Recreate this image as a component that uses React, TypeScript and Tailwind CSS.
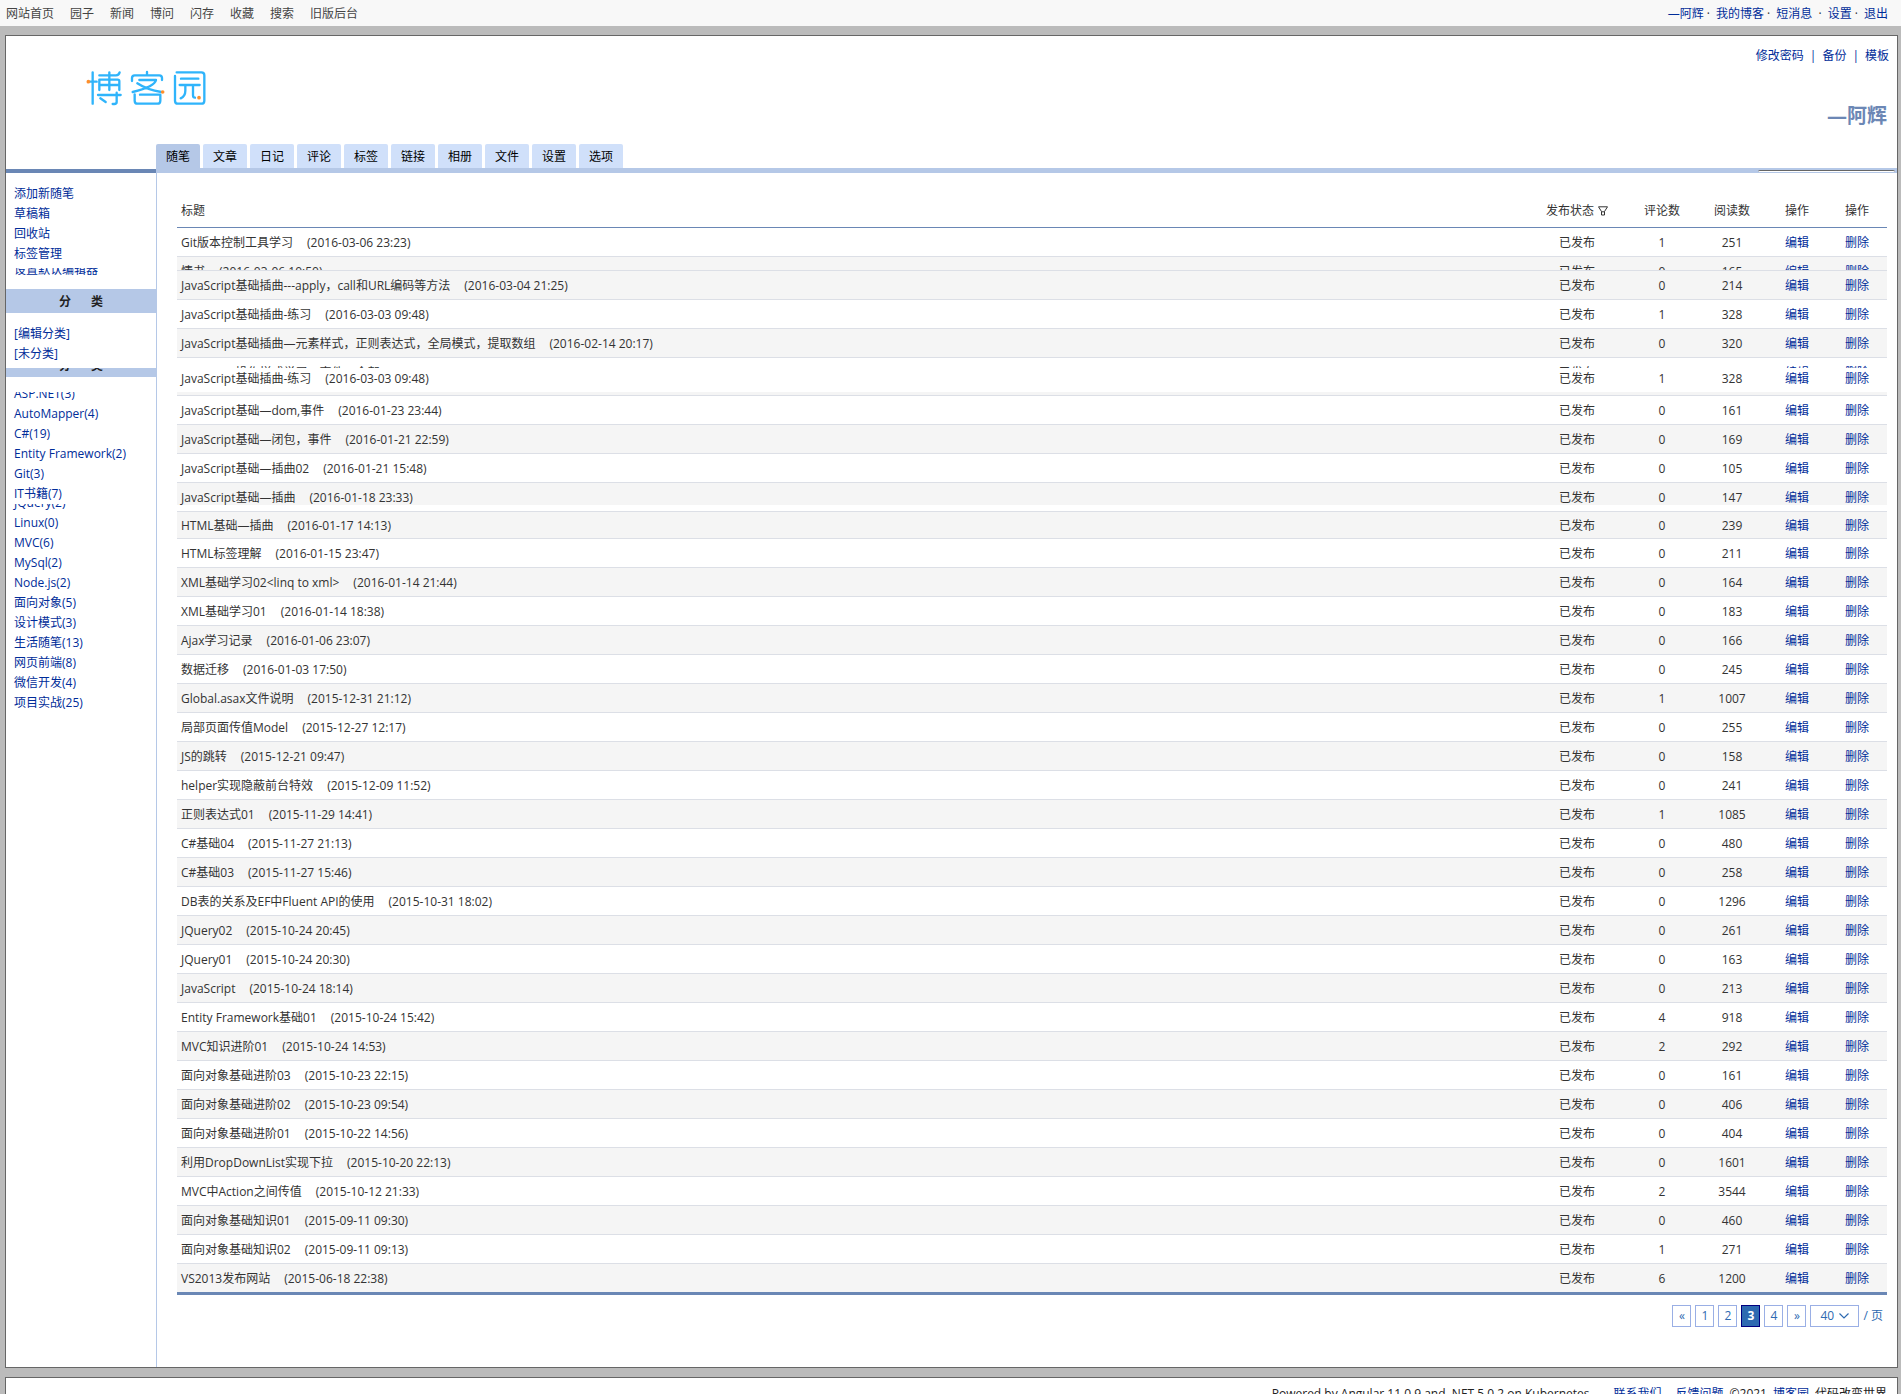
import React from "react";

type Row = {
  title: string;
  date: string;
  comments: number;
  reads: number;
  shade?: boolean;
  kind?: "full" | "topHalf" | "sliver" | "bottomHalf" | "openEnd" | "tight";
};

const rows: Row[] = [
  { title: "Git版本控制工具学习", date: "2016-03-06 23:23", comments: 1, reads: 251 },
  { title: "情书", date: "2016-03-06 10:50", comments: 0, reads: 165, shade: true, kind: "topHalf" },
  { title: "JavaScript基础插曲---apply，call和URL编码等方法", date: "2016-03-04 21:25", comments: 0, reads: 214, shade: true },
  { title: "JavaScript基础插曲-练习", date: "2016-03-03 09:48", comments: 1, reads: 328 },
  { title: "JavaScript基础插曲—元素样式，正则表达式，全局模式，提取数组", date: "2016-02-14 20:17", comments: 0, reads: 320, shade: true },
  { title: "JavaScript操作样式学习—事件，全部", date: "2016-01-25 10:11", comments: 0, reads: 211, kind: "sliver" },
  { title: "JavaScript基础插曲-练习", date: "2016-03-03 09:48", comments: 1, reads: 328, kind: "bottomHalf" },
  { title: "JavaScript基础—dom,事件", date: "2016-01-23 23:44", comments: 0, reads: 161 },
  { title: "JavaScript基础—闭包，事件", date: "2016-01-21 22:59", comments: 0, reads: 169, shade: true },
  { title: "JavaScript基础—插曲02", date: "2016-01-21 15:48", comments: 0, reads: 105 },
  { title: "JavaScript基础—插曲", date: "2016-01-18 23:33", comments: 0, reads: 147, shade: true, kind: "openEnd" },
  { title: "HTML基础—插曲", date: "2016-01-17 14:13", comments: 0, reads: 239, shade: true, kind: "tight" },
  { title: "HTML标签理解", date: "2016-01-15 23:47", comments: 0, reads: 211 },
  { title: "XML基础学习02<linq to xml>", date: "2016-01-14 21:44", comments: 0, reads: 164, shade: true },
  { title: "XML基础学习01", date: "2016-01-14 18:38", comments: 0, reads: 183 },
  { title: "Ajax学习记录", date: "2016-01-06 23:07", comments: 0, reads: 166, shade: true },
  { title: "数据迁移", date: "2016-01-03 17:50", comments: 0, reads: 245 },
  { title: "Global.asax文件说明", date: "2015-12-31 21:12", comments: 1, reads: 1007, shade: true },
  { title: "局部页面传值Model", date: "2015-12-27 12:17", comments: 0, reads: 255 },
  { title: "JS的跳转", date: "2015-12-21 09:47", comments: 0, reads: 158, shade: true },
  { title: "helper实现隐蔽前台特效", date: "2015-12-09 11:52", comments: 0, reads: 241 },
  { title: "正则表达式01", date: "2015-11-29 14:41", comments: 1, reads: 1085, shade: true },
  { title: "C#基础04", date: "2015-11-27 21:13", comments: 0, reads: 480 },
  { title: "C#基础03", date: "2015-11-27 15:46", comments: 0, reads: 258, shade: true },
  { title: "DB表的关系及EF中Fluent API的使用", date: "2015-10-31 18:02", comments: 0, reads: 1296 },
  { title: "JQuery02", date: "2015-10-24 20:45", comments: 0, reads: 261, shade: true },
  { title: "JQuery01", date: "2015-10-24 20:30", comments: 0, reads: 163 },
  { title: "JavaScript", date: "2015-10-24 18:14", comments: 0, reads: 213, shade: true },
  { title: "Entity Framework基础01", date: "2015-10-24 15:42", comments: 4, reads: 918 },
  { title: "MVC知识进阶01", date: "2015-10-24 14:53", comments: 2, reads: 292, shade: true },
  { title: "面向对象基础进阶03", date: "2015-10-23 22:15", comments: 0, reads: 161 },
  { title: "面向对象基础进阶02", date: "2015-10-23 09:54", comments: 0, reads: 406, shade: true },
  { title: "面向对象基础进阶01", date: "2015-10-22 14:56", comments: 0, reads: 404 },
  { title: "利用DropDownList实现下拉", date: "2015-10-20 22:13", comments: 0, reads: 1601, shade: true },
  { title: "MVC中Action之间传值", date: "2015-10-12 21:33", comments: 2, reads: 3544 },
  { title: "面向对象基础知识01", date: "2015-09-11 09:30", comments: 0, reads: 460, shade: true },
  { title: "面向对象基础知识02", date: "2015-09-11 09:13", comments: 1, reads: 271 },
  { title: "VS2013发布网站", date: "2015-06-18 22:38", comments: 6, reads: 1200, shade: true },
];

const boxClass = {
  full: "h-7 items-start pt-px leading-7",
  topHalf: "h-[13px] items-start pt-px leading-7",
  sliver: "h-[10px] items-start pt-px leading-7",
  bottomHalf: "h-6 items-end leading-[26px]",
  openEnd: "h-[22px] items-start pt-px leading-7",
  tight: "h-[26px] items-start leading-7",
};

const link = "text-[#002c99] hover:underline";

function Cell({ kind, left, children }: { kind: keyof typeof boxClass; left?: boolean; children: React.ReactNode }) {
  return (
    <td className="p-0">
      <div className={`flex overflow-hidden ${left ? "pl-1" : "justify-center"} ${boxClass[kind]}`}>
        <div className="shrink-0 whitespace-pre">{children}</div>
      </div>
    </td>
  );
}

function PostRow({ row, last }: { row: Row; last: boolean }) {
  const kind = row.kind ?? "full";
  const line =
    kind === "sliver" || kind === "bottomHalf" || kind === "openEnd" || last ? "" : "border-b border-[#dcdfe6]";
  return (
    <>
      <tr className={`${line} ${row.shade ? "bg-[#f5f5f5]" : "bg-white"}`}>
        <Cell kind={kind} left>
          <a href="#">{row.title}</a>
          <span className="ml-3.5">({row.date})</span>
        </Cell>
        <Cell kind={kind}>已发布</Cell>
        <Cell kind={kind}>{row.comments}</Cell>
        <Cell kind={kind}>{row.reads}</Cell>
        <Cell kind={kind}><a href="#" className={link}>编辑</a></Cell>
        <Cell kind={kind}><a href="#" className={link}>删除</a></Cell>
      </tr>
      {kind === "bottomHalf" && (
        <tr className="border-b border-[#dcdfe6] bg-[#f5f5f5]"><td colSpan={6} className="h-1 p-0" /></tr>
      )}
      {kind === "openEnd" && (
        <tr className="border-b border-[#dcdfe6]"><td colSpan={6} className="h-1.5 p-0" /></tr>
      )}
    </>
  );
}

function Logo() {
  return (
    <svg viewBox="75 40 369 120" className="h-10 w-[123px]" fill="none" stroke="#2fb4fb" strokeWidth="7" strokeLinecap="round" strokeLinejoin="round" role="img" aria-label="博客园">
      <path d="M98 53V147M88 81H110M118 62H168Q177 62 179 53M148 53V106M118 75H173Q178 75 178 80V106M118 75V106M118 91H178M114 121H182M170 114V142Q170 148 163 148H158M121 131L137 142" />
      <path d="M261 52V61M216 79V70Q216 62 224 62H298Q306 62 306 70V76M238 76H288Q284 96 218 112M232 86Q262 106 304 112M224 119V138Q224 147 233 147H292Q301 147 301 138V120H240" />
      <path d="M345 64V138Q345 147 354 147H424Q433 147 433 138V62Q433 53 424 53H350M363 72H415M359 91H419M376 91V108Q376 124 362 131M399 91V122Q399 129 405 129" />
      <g fill="#ff8f2b" stroke="none">
        <circle cx="85" cy="81" r="5.500" />
        <circle cx="308" cy="112" r="5.500" />
        <circle cx="417" cy="129" r="5.500" />
      </g>
    </svg>
  );
}

const siteLinks = ["网站首页", "园子", "新闻", "博问", "闪存", "收藏", "搜索", "旧版后台"];
const tabs = ["随笔", "文章", "日记", "评论", "标签", "链接", "相册", "文件", "设置", "选项"];
const actions = ["添加新随笔", "草稿箱", "回收站", "标签管理"];
const cats1 = ["AutoMapper(4)", "C#(19)", "Entity Framework(2)", "Git(3)", "IT书籍(7)"];
const cats2 = ["Linux(0)", "MVC(6)", "MySql(2)", "Node.js(2)", "面向对象(5)", "设计模式(3)", "生活随笔(13)", "网页前端(8)", "微信开发(4)", "项目实战(25)"];

function SideLink({ children }: { children: string }) {
  return <a href="#" className={`block h-5 shrink-0 pl-2 leading-5 ${link}`}>{children}</a>;
}

function Th({ children }: { children: React.ReactNode }) {
  return <th className="p-0 pt-[3px] text-center font-normal">{children}</th>;
}

export default function App() {
  const pageBtn = "flex h-[22px] w-[19px] items-center justify-center border";
  const idle = "border-[#9aafe5] bg-white text-[#2e6ab1]";
  return (
    <div className="h-screen overflow-hidden bg-[#bbb] font-['Open_Sans','Noto_Sans_CJK_SC',sans-serif] text-xs text-[#333]">
      <header className="flex h-[26px] items-center justify-between bg-[#f8f8f8] pt-0.5 pr-[13px] pl-1.5">
        <nav className="flex gap-4 text-[#444]">
          {siteLinks.map((t) => <a key={t} href="#">{t}</a>)}
        </nav>
        <nav className="flex gap-1.5 whitespace-pre">
          <span><a href="#" className={link}>—阿辉</a> ·</span>
          <span><a href="#" className={link}>我的博客</a> ·</span>
          <span><a href="#" className={link}>短消息</a>  ·</span>
          <span><a href="#" className={link}>设置</a> ·</span>
          <a href="#" className={link}>退出</a>
        </nav>
      </header>

      <div className="mt-[9px] mr-[3px] ml-[5px] border border-[#666] bg-white">
        <div className="flex h-[108px] justify-between">
          <div className="pt-8 pl-[79px]"><Logo /></div>
          <div className="flex flex-col items-end pt-[10px] pr-2">
            <nav className="flex gap-1.5 leading-5">
              <a href="#" className={link}>修改密码</a><span className="text-[#002c99]">|</span>
              <a href="#" className={link}>备份</a><span className="text-[#002c99]">|</span>
              <a href="#" className={link}>模板</a>
            </nav>
            <h1 className="mt-9 pr-0.5 text-xl leading-7 font-bold text-[#6c87b5]">—阿辉</h1>
          </div>
        </div>
        <div className="flex">
          <aside className="flex w-[150px] shrink-0 flex-col">
            <div className="mt-[25px] h-1 bg-[#6a87b5]" />
            <div className="mt-[11px]">
              {actions.map((t) => <SideLink key={t}>{t}</SideLink>)}
            </div>
            <div className="mt-1 flex h-2 items-end overflow-hidden">
              <div className="h-4 shrink-0 overflow-hidden"><SideLink>设置默认编辑器</SideLink></div>
            </div>
            <h2 className="mt-[13px] flex h-6 justify-center gap-5 bg-[#b5c8e7] pt-px leading-6 font-bold text-[#222]">
              <span>分</span><span>类</span>
            </h2>
            <div className="mt-[11px]"><SideLink>[编辑分类]</SideLink><SideLink>[未分类]</SideLink></div>
            <h2 className="mt-1 flex h-[9px] items-end justify-center gap-5 overflow-hidden bg-[#b5c8e7] leading-[22px] font-bold text-[#222]">
              <span>分</span><span>类</span>
            </h2>
            <div className="mt-[15px] flex h-3 items-end overflow-hidden"><SideLink>ASP.NET(3)</SideLink></div>
            {cats1.map((t) => <SideLink key={t}>{t}</SideLink>)}
            <div className="flex h-[9px] items-end overflow-hidden"><SideLink>JQuery(2)</SideLink></div>
            {cats2.map((t) => <SideLink key={t}>{t}</SideLink>)}
          </aside>

          <div className="flex min-w-0 flex-1 flex-col">
            <nav className="relative flex gap-[3px] border-b-[5px] border-[#b5c8e7] text-black">
              {tabs.map((t, i) => (
                <a key={t} href="#" className={`flex h-6 w-11 items-center justify-center rounded-t-[2px] pt-0.5 ${i === 0 ? "bg-[#b5c8e7]" : "bg-[#d0e0fa]"}`}>{t}</a>
              ))}
              <span className="absolute right-0.5 -bottom-1 h-0.5 w-[137px] rounded-t-[2px] border-t border-[#666] bg-white" />
            </nav>
            <main className="flex-1 border-l border-[#b5c8e7] pt-5 pr-[10px] pb-10 pl-5">
              <table className="w-full table-fixed border-collapse border-b-[3px] border-[#6a87b5]">
                <colgroup>
                  <col /><col className="w-[100px]" /><col className="w-[70px]" /><col className="w-[70px]" /><col className="w-[60px]" /><col className="w-[60px]" />
                </colgroup>
                <thead>
                  <tr className="h-[34px] border-b border-[#6a87b5]">
                    <th className="p-0 pt-[3px] pl-1 text-left font-normal">标题</th>
                    <Th>
                      <span className="flex items-center justify-center gap-1">
                        发布状态
                        <svg viewBox="0 0 10 10" className="size-[10px]" fill="none" stroke="#333" strokeLinejoin="round" aria-hidden="true">
                          <path d="M.5 .8H9.500L6.500 5.500V9H3.500V5.500ZM3.500 5.800H6.500" />
                        </svg>
                      </span>
                    </Th>
                    <Th>评论数</Th>
                    <Th>阅读数</Th>
                    <Th>操作</Th>
                    <Th>操作</Th>
                  </tr>
                </thead>
                <tbody>{rows.map((r, i) => <PostRow key={i} row={r} last={i === rows.length - 1} />)}</tbody>
              </table>
              <div className="mt-[10px] flex items-center justify-end gap-1 pr-1 text-[#2e6ab1]">
                {["«", "1", "2", "3", "4", "»"].map((p) => (
                  <button key={p} className={`${pageBtn} ${p === "3" ? "border-[#000080] bg-[#2e6ab1] font-bold text-white" : idle}`}>{p}</button>
                ))}
                <div className="relative">
                  <select aria-label="每页条数" defaultValue="40" className="block h-[22px] w-[49px] appearance-none border border-[#9aafe5] bg-white pl-[9px] text-[#2e6ab1]">
                    <option>40</option>
                  </select>
                  <svg viewBox="0 0 10 6" className="pointer-events-none absolute top-2 right-[10px] h-1.5 w-[10px]" fill="none" stroke="#2e6ab1" strokeWidth="1.200" aria-hidden="true"><path d="M.5 .5L5 5L9.500 .5" /></svg>
                </div>
                <span>/ 页</span>
              </div>
            </main>
          </div>
        </div>
      </div>

      <footer className="mt-[9px] mr-[3px] ml-[5px] flex justify-end gap-1.5 border border-[#666] bg-white pt-1.5 pr-[10px] pb-3 leading-5 text-[#222]">
        <span className="mr-4.5">Powered by Angular 11.0.9 and .NET 5.0.2 on Kubernetes</span>
        <a href="#" className={`mr-2 ${link}`}>联系我们</a>
        <a href="#" className={link}>反馈问题</a>
        <span>©2021</span>
        <a href="#" className={link}>博客园</a>
        <span>代码改变世界</span>
      </footer>
    </div>
  );
}
